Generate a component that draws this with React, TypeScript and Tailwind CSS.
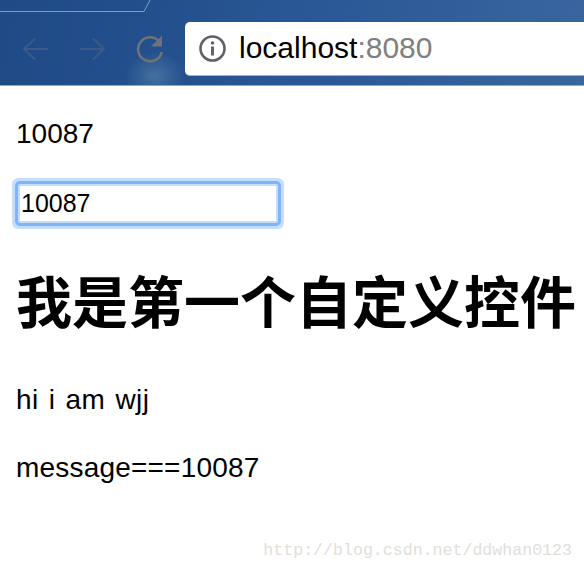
const sans = "font-['Liberation_Sans','Noto_Sans_CJK_SC',sans-serif]";

export default function App() {
  return (
    <div className={`relative w-[584px] h-[570px] overflow-hidden bg-white text-black ${sans}`}>
      {/* browser chrome */}
      <div className="relative h-[86px] border-b border-[#8fa9cc] bg-[radial-gradient(ellipse_30px_24px_at_155px_76px,#44709f_0%,transparent_100%),linear-gradient(100deg,#1f4a86_0%,#24508e_30%,#2c5a98_60%,#3a659f_100%)]">
        <svg width="152" height="13" viewBox="0 0 152 13" fill="none" className="absolute left-0 top-0">
          <path d="M0 11.5H144L150 0" stroke="#7f9ac4" />
        </svg>
        <div className="flex items-center h-full pt-[12px]">
          <svg width="185" height="40" viewBox="0 0 185 40" fill="none" className="shrink-0">
            <g stroke="#3a5a88" strokeWidth="2">
              <path d="M24 20h24M35 9.5L24 20l11 10.5" />
              <path d="M80 20h24M93 9.5L104 20 93 30.5" />
            </g>
            <path d="M160 14.5a12 12 0 1 0 1.8 9.5" transform="translate(0 -1)" stroke="#6f7276" strokeWidth="2.6" />
            <path d="M162 6.5v11h-11z" fill="#6f7276" />
          </svg>
          <div className="flex items-center flex-1 h-[54px] pl-[14px] bg-white rounded-l-[5px] border-b border-[#b0b0b0]">
            <svg width="27" height="27" viewBox="0 0 27 27" fill="none">
              <circle cx="13.5" cy="13.5" r="12" stroke="#5f6368" strokeWidth="2.6" />
              <circle cx="13.5" cy="8" r="1.8" fill="#5f6368" />
              <rect x="12" y="11.5" width="3" height="9" fill="#5f6368" />
            </svg>
            <span className="ml-[13px] text-[30px] leading-none">
              localhost<span className="text-[#808080]">:8080</span>
            </span>
          </div>
        </div>
      </div>

      {/* page */}
      <div className="px-4">
        <p className="mt-[32px] text-[28px] leading-[32px]">10087</p>
        <input
          readOnly
          value="10087"
          className="block mt-[34px] ml-[2px] w-[260px] h-[39px] px-[1px] text-[25px] leading-none bg-white border-2 border-[#c5defc] rounded-[2px] outline-none shadow-[0_0_0_3px_#7fb4fb,0_0_0_6px_#c5defc]"
        />
        <h1 className="mt-[45px] text-[56px] leading-[72px] font-bold whitespace-nowrap">我是第一个自定义控件</h1>
        <p className="mt-[44px] text-[28px] leading-[32px] tracking-[0.4px] [word-spacing:2px]">hi i am wjj</p>
        <p className="mt-[36px] text-[28px] leading-[32px] tracking-[0.2px]">message===10087</p>
      </div>

      {/* watermark */}
      <div className="absolute right-[12px] top-[541px] font-['Liberation_Mono',monospace] text-[16.6px] leading-[20px] text-[#e0e0da]">
        http://blog.csdn.net/ddwhan0123
      </div>
    </div>
  );
}
